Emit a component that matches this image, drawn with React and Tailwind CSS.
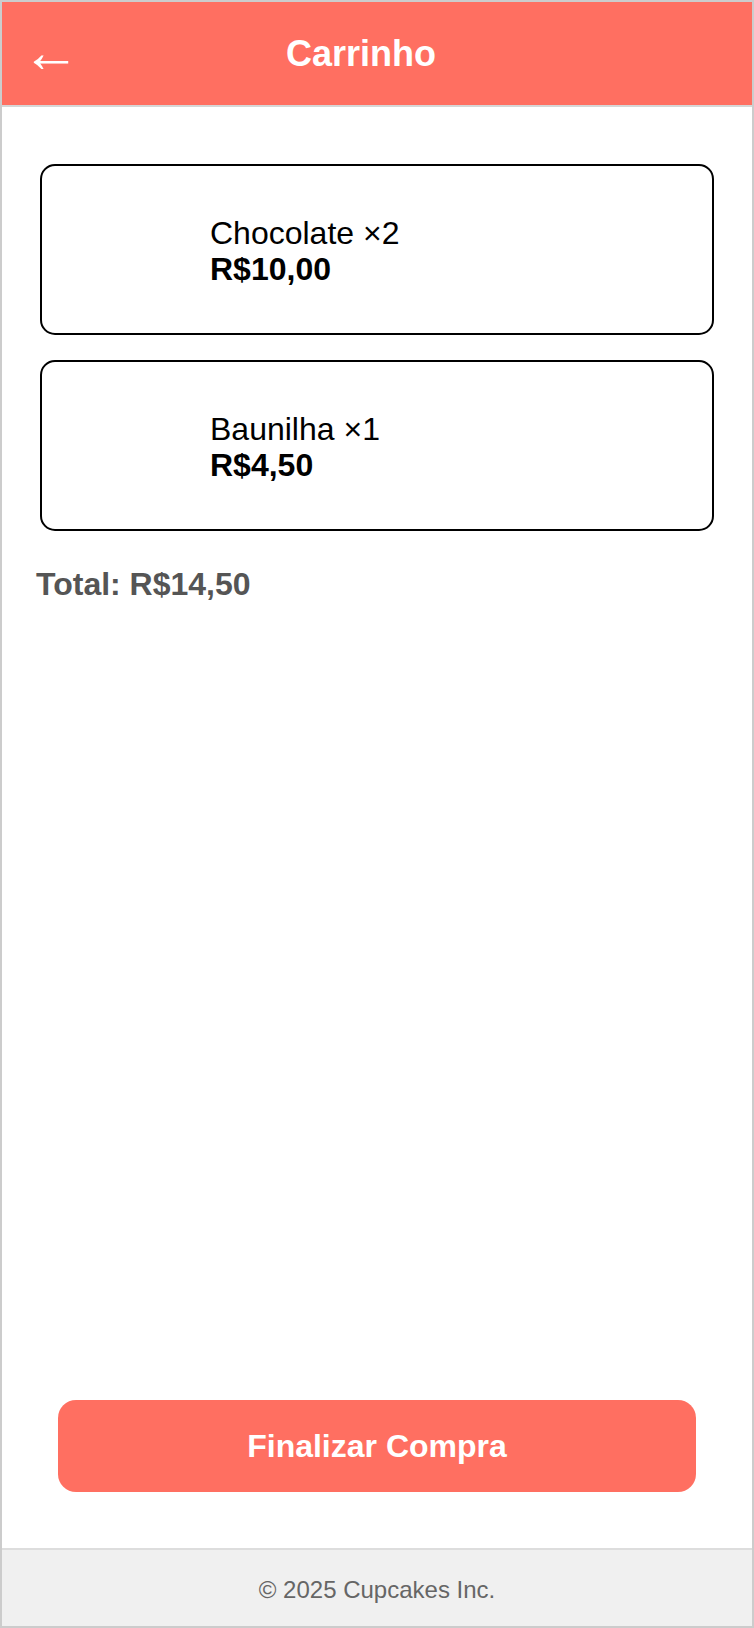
import React from "react";

const items = [
    { id: 1, name: "Chocolate", qty: 2, price: "R$10,00" },
    { id: 2, name: "Baunilha", qty: 1, price: "R$4,50" },
];

const CartItem = ({ item }) => (
    <div className="mx-[4px] flex items-center gap-[17px] rounded-[15px] border-2 border-black bg-white p-[16px]">
        {/* image slot (picture did not load) */}
        <div className="h-[135px] w-[135px] shrink-0" />
        <div className="flex flex-col pt-[3px] text-[32px] leading-[36px] text-black">
            <span>
                {item.name} ×{item.qty}
            </span>
            <span className="font-bold">{item.price}</span>
        </div>
    </div>
);

export default function App() {
    return (
        <div
            className="flex h-[1628px] w-[754px] flex-col border-2 border-[#cccccc] bg-white"
            style={{ fontFamily: '"Liberation Sans", Arial, sans-serif' }}
        >
            <header className="flex h-[105px] shrink-0 items-center border-b-2 border-[#d6d6d6] bg-[#ff6f61] pl-[20px] pr-[104px] text-white">
                <button className="-mt-[4px] w-[52px] text-left text-[58px] font-light leading-none">←</button>
                <h1 className="flex-1 text-center text-[36px] font-bold leading-none">Carrinho</h1>
            </header>

            <main className="flex flex-1 flex-col px-[34px] pb-[56px] pt-[57px]">
                <div className="flex flex-col gap-[25px]">
                    {items.map((item) => (
                        <CartItem key={item.id} item={item} />
                    ))}
                </div>
                <p className="mt-[35px] text-[32px] font-bold leading-[37px] text-[#555555]">Total: R$14,50</p>

                <div className="mt-auto px-[22px]">
                    <button className="h-[92px] w-full rounded-[18px] bg-[#ff6f61] text-[32px] font-bold text-white">
                        Finalizar Compra
                    </button>
                </div>
            </main>

            <footer className="flex h-[78px] shrink-0 items-center justify-center border-t-2 border-[#dddddd] bg-[#f0f0f0] pt-[3px] text-[24px] text-[#666666]">
                © 2025 Cupcakes Inc.
            </footer>
        </div>
    );
}
